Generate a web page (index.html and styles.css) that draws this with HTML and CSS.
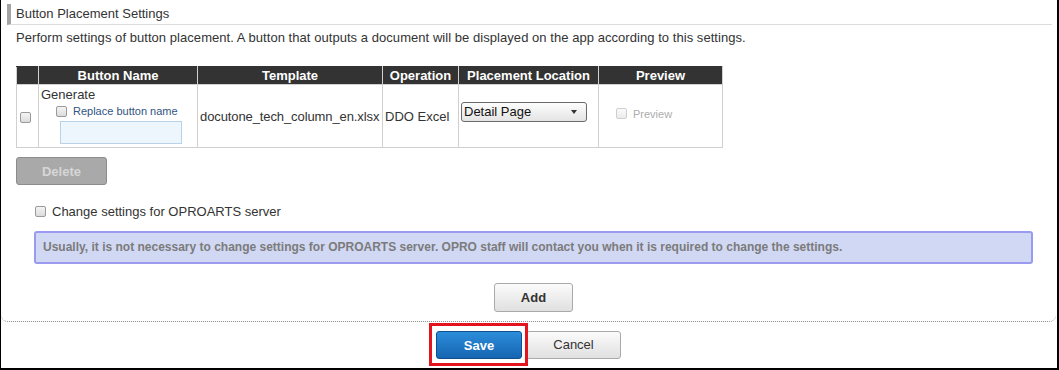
FILE: index.html
```html
<!DOCTYPE html>
<html lang="en">
<head>
<meta charset="utf-8">
<title>Button Placement Settings</title>
<link rel="stylesheet" href="styles.css">
</head>
<body>
<div class="frame">
  <section class="panel">
    <h2 class="panel-title">Button Placement Settings</h2>
    <p class="desc">Perform settings of button placement. A button that outputs a document will be displayed on the app according to this settings.</p>
    <table class="placement">
      <colgroup>
        <col class="c-check"><col class="c-name"><col class="c-tpl"><col class="c-op"><col class="c-loc"><col class="c-prev">
      </colgroup>
      <thead>
        <tr><th></th><th>Button Name</th><th>Template</th><th>Operation</th><th>Placement Location</th><th>Preview</th></tr>
      </thead>
      <tbody>
        <tr>
          <td class="cell-check"><input type="checkbox" class="cb"></td>
          <td class="cell-name">
            <div class="name-label">Generate</div>
            <label class="replace"><input type="checkbox" class="cb"><span>Replace button name</span></label>
            <input type="text" class="name-input">
          </td>
          <td class="cell-tpl">docutone_tech_column_en.xlsx</td>
          <td>DDO Excel</td>
          <td class="cell-loc"><div class="select"><span>Detail Page</span><span class="arrow"></span></div></td>
          <td class="cell-prev"><label class="preview"><input type="checkbox" class="cb cb-disabled" disabled><span>Preview</span></label></td>
        </tr>
      </tbody>
    </table>
    <button class="btn btn-disabled" type="button">Delete</button>
    <label class="server-opt"><input type="checkbox" class="cb"><span>Change settings for OPROARTS server</span></label>
    <div class="info">Usually, it is not necessary to change settings for OPROARTS server. OPRO staff will contact you when it is required to change the settings.</div>
    <div class="add-row"><button class="btn btn-light btn-add" type="button">Add</button></div>
  </section>
  <div class="footer">
    <span class="highlight"><button class="btn btn-primary" type="button">Save</button></span>
    <button class="btn btn-light btn-cancel" type="button">Cancel</button>
  </div>
</div>
</body>
</html>
```

FILE: styles.css
```css
html, body {
  margin: 0;
  padding: 0;
  background: #fff;
}
body {
  font-family: "Liberation Sans", Arial, sans-serif;
  font-size: 13px;
  color: #333;
}
.frame {
  width: 1059px;
  height: 370px;
  box-sizing: border-box;
  border-left: 1px solid #000;
  border-right: 2px solid #000;
  border-bottom: 2px solid #000;
  overflow: hidden;
}
.panel {
  margin-right: 1px;
  padding: 4px 15px 9px 15px;
  border-bottom: 1px dotted #8a8a8a;
  border-radius: 0 0 7px 7px;
}
.panel-title {
  margin: 0 -11px 0 -9px;
  height: 20px;
  line-height: 20px;
  padding-left: 5px;
  border-left: 4px solid #a3a3a3;
  border-bottom: 1px solid #dcdcdc;
  font-size: 13px;
  font-weight: normal;
  color: #333;
}
.desc {
  margin: 4px 0 0 0;
  line-height: 18px;
  color: #333;
  letter-spacing: 0.05px;
}
.placement {
  margin-top: 19px;
  border-collapse: collapse;
  table-layout: fixed;
  width: 706px;
}
.c-check { width: 22px; }
.c-name { width: 159px; }
.c-tpl { width: 185px; }
.c-op { width: 76px; }
.c-loc { width: 140px; }
.c-prev { width: 124px; }
.placement th {
  background: #333;
  color: #fff;
  font-weight: bold;
  height: 17px;
  line-height: 17px;
  padding: 0;
  border: 1px solid #d0d0d0;
  border-top: 1px solid #333;
  text-align: center;
}
.placement td {
  border: 1px solid #d0d0d0;
  height: 61px;
  padding: 0 2px;
  vertical-align: middle;
  white-space: nowrap;
}
.placement td.cell-check { padding: 0 0 0 3px; }
.placement td.cell-tpl { letter-spacing: -0.1px; }
.placement td.cell-name {
  vertical-align: top;
  padding: 1px 2px 0 2px;
}
.name-label {
  line-height: 17px;
}
.cb {
  -webkit-appearance: none;
  appearance: none;
  width: 11px;
  height: 11px;
  margin: 0;
  box-sizing: border-box;
  border: 1px solid #9a9a9a;
  border-radius: 2px;
  background: linear-gradient(#f4f4f4, #dcdcdc);
  vertical-align: middle;
}
.cb-disabled {
  border-color: #cfcfcf;
  background: linear-gradient(#fafafa, #ececec);
}
.replace {
  display: flex;
  align-items: center;
  gap: 6px;
  margin-left: 15px;
  height: 16px;
  font-size: 11px;
  color: #2f557f;
}
.name-input {
  display: block;
  margin: 2px 0 0 19px;
  width: 122px;
  height: 23px;
  box-sizing: border-box;
  border: 1px solid #b9d2e8;
  background: #eef6fd;
  padding: 0;
}
.select {
  display: flex;
  align-items: center;
  justify-content: space-between;
  width: 126px;
  height: 20px;
  box-sizing: border-box;
  padding: 0 9px 0 2px;
  border: 1px solid #6a6a6a;
  border-radius: 3px;
  background: linear-gradient(#fdfdfd, #e4e4e4);
  color: #111;
  margin-top: -9px;
}
.arrow {
  width: 0;
  height: 0;
  border-left: 3px solid transparent;
  border-right: 3px solid transparent;
  border-top: 4px solid #333;
}
.placement td.cell-prev { padding-left: 17px; }
.preview {
  display: flex;
  align-items: center;
  gap: 6px;
  font-size: 11px;
  color: #adadad;
  margin-top: -5px;
}
.btn {
  font-family: "Liberation Sans", Arial, sans-serif;
  font-size: 13px;
  box-sizing: border-box;
  border-radius: 3px;
  padding: 0;
  cursor: pointer;
}
.btn-disabled {
  display: block;
  margin-top: 9px;
  width: 91px;
  height: 28px;
  border: 1px solid #8c8c8c;
  background: #a9a9a9;
  color: #d6d6d6;
  font-weight: bold;
}
.server-opt {
  display: flex;
  align-items: center;
  gap: 6px;
  margin: 19px 0 0 19px;
  height: 14px;
  color: #333;
}
.info {
  margin: 13px 8px 0 18px;
  height: 33px;
  box-sizing: border-box;
  border: 2px solid #9a9af0;
  border-radius: 3px;
  background: #d1d8f3;
  padding: 0 7px;
  line-height: 29px;
  font-size: 12px;
  font-weight: bold;
  color: #7b7b7b;
}
.add-row {
  display: flex;
  justify-content: center;
  margin-top: 19px;
  padding-left: 10px;
}
.btn-light {
  border: 1px solid #a9a9a9;
  background: linear-gradient(#fbfbfb, #e0e0e0);
  color: #333;
}
.btn-add {
  width: 79px;
  height: 29px;
  font-weight: bold;
}
.footer {
  display: flex;
  justify-content: center;
  align-items: center;
  margin-top: 1px;
  padding-right: 8px;
}
.highlight {
  display: flex;
  border: 3px solid #e3141e;
  padding: 5px 3px 4px 4px;
  position: relative;
  z-index: 1;
}
.btn-primary {
  width: 86px;
  height: 28px;
  border: 1px solid #0e4f8e;
  background: linear-gradient(#2c8ddb, #1665b1);
  color: #fff;
  font-weight: bold;
}
.btn-cancel {
  width: 95px;
  height: 28px;
  margin-left: -2px;
  font-size: 13px;
}
```
